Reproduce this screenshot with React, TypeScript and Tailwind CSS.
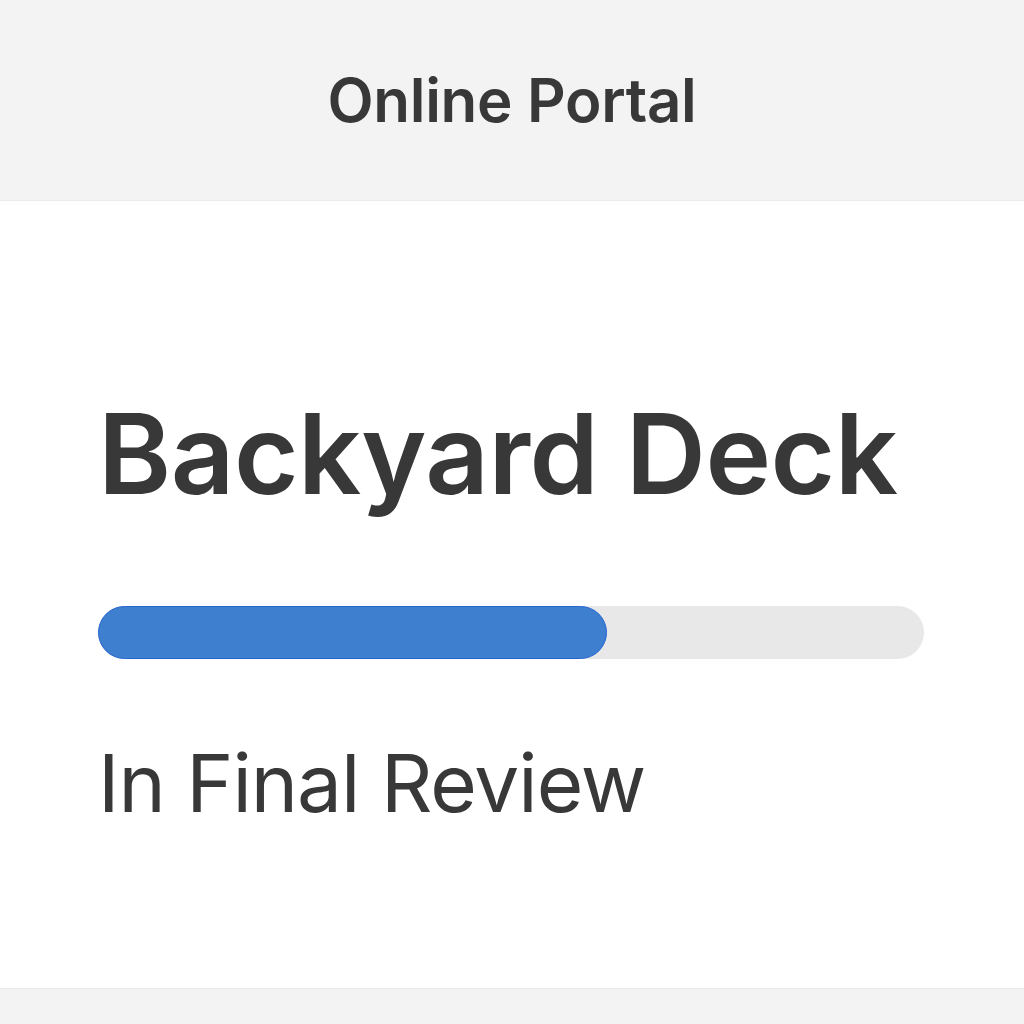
import React from 'react';

const App: React.FC = () => {
  return (
    <div className="min-h-[1024px] w-full bg-[#f3f3f3] text-[#383838]" style={{ fontFamily: 'Inter, "Noto Sans", sans-serif' }}>
      <header className="flex h-[200px] items-center justify-center">
        <h1 className="text-[60px] font-semibold leading-none tracking-[-0.3px]">Online Portal</h1>
      </header>
      <main className="flex h-[789px] flex-col border-y border-[#ebebeb] bg-white px-[98px] pt-[197px]">
        <h2 className="text-[111px] font-semibold leading-none tracking-[-0.5px]">Backyard Deck</h2>
        <div className="mt-[97px] h-[53px] w-[826px] rounded-full bg-[#e8e8e8]">
          <div className="h-full w-[509px] rounded-full border border-[#2565d0] bg-[#3f7fd0]" />
        </div>
        <p className="mt-[84px] text-[80px] font-normal leading-none tracking-[-1px]">In Final Review</p>
      </main>
    </div>
  );
};

export default App;
